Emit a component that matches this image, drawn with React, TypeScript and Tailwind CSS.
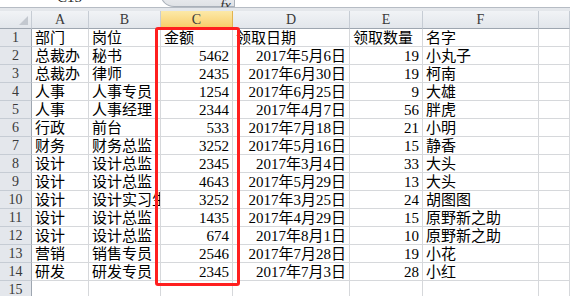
import React from "react";

const rows: string[][] = [
  ["部门", "岗位", "金额", "领取日期", "领取数量", "名字"],
  ["总裁办", "秘书", "5462", "2017年5月6日", "19", "小丸子"],
  ["总裁办", "律师", "2435", "2017年6月30日", "19", "柯南"],
  ["人事", "人事专员", "1254", "2017年6月25日", "9", "大雄"],
  ["人事", "人事经理", "2344", "2017年4月7日", "56", "胖虎"],
  ["行政", "前台", "533", "2017年7月18日", "21", "小明"],
  ["财务", "财务总监", "3252", "2017年5月16日", "15", "静香"],
  ["设计", "设计总监", "2345", "2017年3月4日", "33", "大头"],
  ["设计", "设计总监", "4643", "2017年5月29日", "13", "大头"],
  ["设计", "设计实习生", "3252", "2017年3月25日", "24", "胡图图"],
  ["设计", "设计总监", "1435", "2017年4月29日", "15", "原野新之助"],
  ["设计", "设计总监", "674", "2017年8月1日", "10", "原野新之助"],
  ["营销", "销售专员", "2546", "2017年7月28日", "19", "小花"],
  ["研发", "研发专员", "2345", "2017年7月3日", "28", "小红"],
  ["", "", "", "", "", ""],
];

const letters = ["A", "B", "C", "D", "E", "F", ""];
const cols = "grid-cols-[32px_57px_72px_72px_117px_73px_116px_31px]";

function HeaderCell({ label, active }: { label: string; active?: boolean }) {
  return (
    <div
      className={
        active
          ? "flex h-[18px] items-center justify-center border-r border-b border-r-[#e2b34f] border-b-[#f0b23a] bg-gradient-to-b from-[#fce9a8] to-[#f8cd66] text-[14px] text-[#3a3a3a]"
          : "flex h-[18px] items-center justify-center border-r border-b border-r-[#c6ccd4] border-b-[#9ea6b0] bg-gradient-to-b from-[#f1f3f6] to-[#e2e6eb] text-[14px] text-[#3a3a3a]"
      }
    >
      {label}
    </div>
  );
}

export default function App() {
  return (
    <div
      className="relative h-[296px] w-[570px] overflow-hidden bg-white text-black"
      style={{ fontFamily: '"Liberation Serif", "Noto Sans CJK SC", serif' }}
    >
      {/* formula bar, cut off at the top */}
      <div className="flex h-[7px] overflow-hidden bg-white">
        <div className="w-[57px]" />
        <div className="-mt-[11px] w-[103px] text-[15px] leading-[16px] text-[#222]">C15</div>
        <div className="relative -mt-[12px] flex h-[19px] w-[75px] items-end justify-end rounded-bl-[14px] border-b border-l border-r border-[#aab1ba] bg-gradient-to-b from-[#f4f5f7] to-[#dfe2e6] pr-[3px]">
          <span className="-mb-[7px] text-[15px] italic leading-[16px] text-[#333]">fx</span>
        </div>
        <div className="flex-1" />
      </div>
      <div className="h-[4px] border-t border-[#b6bcc4] bg-[#e4e7eb]" />

      <div className={`grid ${cols}`}>
        <div className="relative h-[18px] border-r border-b border-r-[#c6ccd4] border-b-[#9ea6b0] bg-gradient-to-b from-[#f1f3f6] to-[#e2e6eb]">
          <svg className="absolute right-[3px] bottom-[3px]" width="9" height="9" viewBox="0 0 9 9">
            <polygon points="9,0 9,9 0,9" fill="#c3c8cf" />
          </svg>
        </div>
        {letters.map((l, i) => (
          <HeaderCell key={i} label={l} active={l === "C"} />
        ))}

        {rows.map((r, ri) => (
          <React.Fragment key={ri}>
            <div className="flex h-[18px] items-center justify-center border-r border-b border-r-[#9ea6b0] border-b-[#c6ccd4] bg-[#e4e7ec] text-[14px] text-[#3a3a3a]">
              {ri + 1}
            </div>
            {r.map((c, ci) => {
              const alignRight = ci >= 2 && ci <= 4 && ri > 0;
              return (
                <div
                  key={ci}
                  className={`h-[18px] overflow-hidden whitespace-nowrap border-r border-b border-[#d6d8db] text-[15px] leading-[18px] ${
                    alignRight ? "pr-[3px] text-right" : "pl-[3px] text-left"
                  }`}
                >
                  {c}
                </div>
              );
            })}
            <div className="h-[18px] border-r border-b border-[#d6d8db]" />
          </React.Fragment>
        ))}
      </div>

      {/* red annotation frame around column C */}
      <div className="pointer-events-none absolute top-[27px] left-[155px] h-[259px] w-[85px] rounded-[3px] border-[3px] border-[#ff1f1f]" />
    </div>
  );
}
